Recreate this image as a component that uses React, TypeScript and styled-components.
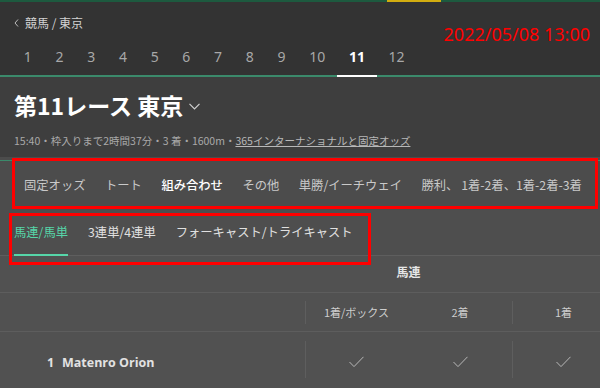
import { createGlobalStyle } from "styled-components";
import styled from "styled-components";

const GlobalStyle = createGlobalStyle`
  body {
    margin: 0;
    background: #515151;
    overflow: hidden;
    font-family: "Noto Sans CJK JP", "Noto Sans", sans-serif;
  }
`;

const races = [1, 2, 3, 4, 5, 6, 7, 8, 9, 10, 11, 12];

const marketTabs = [
  { label: "固定オッズ" },
  { label: "トート" },
  { label: "組み合わせ", active: true },
  { label: "その他" },
  { label: "単勝/イーチウェイ" },
  { label: "勝利、 1着-2着、1着-2着-3着" },
];

const subTabs = [
  { label: "馬連/馬単", active: true },
  { label: "3連単/4連単" },
  { label: "フォーキャスト/トライキャスト" },
];

const ChevronLeft = () => (
  <svg width="5" height="8" viewBox="0 0 5 8">
    <polyline points="4,0.5 1,4 4,7.5" fill="none" stroke="#bdbdbd" strokeWidth="1" />
  </svg>
);

const ChevronDown = () => (
  <svg width="11" height="7" viewBox="0 0 11 7">
    <polyline points="0.5,0.8 5.5,5.8 10.5,0.8" fill="none" stroke="#d0d0d0" strokeWidth="1.2" />
  </svg>
);

const Check = () => (
  <svg width="15" height="12" viewBox="0 0 15 12">
    <polyline points="0.5,6 5,10.6 14.5,0.8" fill="none" stroke="#b8b8b8" strokeWidth="1" />
  </svg>
);

const App = () => {
  return (
    <>
      <GlobalStyle />
      <Page>
        <Header>
          <TopStrip>
            <StripPart $color="#1d5a3f" $width="387px" />
            <StripPart $color="#d2ad10" $width="54px" />
            <StripPart $color="#1d5a3f" />
          </TopStrip>
          <HeaderTop>
            <Breadcrumb>
              <ChevronLeft />
              <span>競馬 / 東京</span>
            </Breadcrumb>
            <Stamp>2022/05/08 13:00</Stamp>
          </HeaderTop>
          <RaceNav>
            {races.map((n) => (
              <RaceItem key={n} $active={n === 11}>
                {n}
              </RaceItem>
            ))}
          </RaceNav>
        </Header>

        <TitleSection>
          <Title>
            第11レース 東京
            <ChevronDown />
          </Title>
          <Meta>
            15:40・枠入りまで2時間37分・3 着・1600m・<MetaLink>365インターナショナルと固定オッズ</MetaLink>
          </Meta>
        </TitleSection>

        <TabsArea>
          <MarketBar>
            {marketTabs.map((t) => (
              <MarketTab key={t.label} $active={t.active}>
                {t.label}
              </MarketTab>
            ))}
          </MarketBar>
          <SubBar>
            {subTabs.map((t) => (
              <SubTab key={t.label} $active={t.active}>
                {t.label}
              </SubTab>
            ))}
          </SubBar>
          <Annotation $top="1px" $left="12px" $width="586px" $height="51px" />
          <Annotation $top="56px" $left="9px" $width="362px" $height="52px" />
        </TabsArea>

        <Table>
          <GroupRow>
            <Cell />
            <GroupCell>馬連</GroupCell>
            <Cell />
          </GroupRow>
          <HeadRow>
            <Cell />
            <HeadCell $divider>1着/ボックス</HeadCell>
            <HeadCell>2着</HeadCell>
            <HeadCell $divider>1着</HeadCell>
          </HeadRow>
          <DataRow>
            <Runner>
              <RunnerNo>1</RunnerNo>
              <span>Matenro Orion</span>
            </Runner>
            <CheckCell $divider>
              <Check />
            </CheckCell>
            <CheckCell>
              <Check />
            </CheckCell>
            <CheckCell $divider>
              <Check />
            </CheckCell>
          </DataRow>
        </Table>
      </Page>
    </>
  );
};

export default App;

const Page = styled.div`
  width: 600px;
  height: 388px;
  overflow: hidden;
  background: #515151;
`;

const Header = styled.header`
  background: #333333;
`;

const TopStrip = styled.div`
  display: flex;
  height: 2px;
`;

const StripPart = styled.div<{ $color: string; $width?: string }>`
  background: ${(p) => p.$color};
  flex: ${(p) => (p.$width ? `0 0 ${p.$width}` : "1")};
`;

const HeaderTop = styled.div`
  display: flex;
  justify-content: space-between;
  height: 42px;
`;

const Breadcrumb = styled.div`
  display: flex;
  align-items: center;
  gap: 6px;
  align-self: flex-start;
  padding: 13px 0 0 14px;
  font-size: 12px;
  line-height: 16px;
  color: #d2d2d2;
`;

const Stamp = styled.div`
  align-self: flex-start;
  padding: 21px 10px 0 0;
  font-family: "Noto Sans", "Liberation Sans", sans-serif;
  font-size: 18px;
  line-height: 22px;
  color: #ff0000;
`;

const RaceNav = styled.nav`
  display: flex;
  height: 31px;
  padding-left: 12px;
  border-bottom: 2px solid #3b8a6b;
`;

const RaceItem = styled.div<{ $active?: boolean }>`
  box-sizing: border-box;
  height: 33px;
  margin-bottom: -2px;
  padding: 4px 11.85px 0;
  font-family: "Noto Sans", sans-serif;
  font-size: 14px;
  line-height: 18px;
  color: ${(p) => (p.$active ? "#ffffff" : "#a8a8a8")};
  font-weight: ${(p) => (p.$active ? 700 : 400)};
  border-bottom: 2px solid ${(p) => (p.$active ? "#ffffff" : "transparent")};
`;

const TitleSection = styled.section`
  box-sizing: border-box;
  height: 80px;
  padding: 14px 14px 0;
  background: #3e3e3e;
`;

const Title = styled.h1`
  display: flex;
  align-items: center;
  gap: 6px;
  margin: 0;
  font-size: 23px;
  line-height: 28px;
  font-weight: 700;
  color: #ffffff;

  svg {
    margin-top: 3px;
  }
`;

const Meta = styled.p`
  margin: 15px 0 0;
  font-size: 10.5px;
  line-height: 14px;
  color: #a9a9a9;
`;

const MetaLink = styled.span`
  text-decoration: underline;
  color: #b8b8b8;
`;

const TabsArea = styled.div`
  position: relative;
`;

const MarketBar = styled.div`
  display: flex;
  align-items: center;
  gap: 19.5px;
  box-sizing: border-box;
  height: 53px;
  padding: 3px 0 0 24px;
  background: linear-gradient(to bottom, #4c4c4c 3px, #3b8a6b 3px, #3b8a6b 4px, #4c4c4c 4px);
  white-space: nowrap;
`;

const MarketTab = styled.div<{ $active?: boolean }>`
  font-size: 12.3px;
  line-height: 16px;
  color: ${(p) => (p.$active ? "#ffffff" : "#c9c9c9")};
  font-weight: ${(p) => (p.$active ? 500 : 400)};
`;

const SubBar = styled.div`
  display: flex;
  gap: 20px;
  box-sizing: border-box;
  height: 46px;
  padding-left: 14px;
  background: #4e4e4e;
  border-bottom: 1px solid #5e5e5e;
`;

const SubTab = styled.div<{ $active?: boolean }>`
  box-sizing: border-box;
  height: 46px;
  margin-bottom: -1px;
  font-size: 12.3px;
  line-height: 44px;
  color: ${(p) => (p.$active ? "#56d6a9" : "#e0e0e0")};
  border-bottom: 2px solid ${(p) => (p.$active ? "#56d6a9" : "transparent")};
`;

const Annotation = styled.div<{ $top: string; $left: string; $width: string; $height: string }>`
  position: absolute;
  top: ${(p) => p.$top};
  left: ${(p) => p.$left};
  width: ${(p) => p.$width};
  height: ${(p) => p.$height};
  box-sizing: border-box;
  border: 3px solid #ff0000;
  pointer-events: none;
`;

const Table = styled.div`
  width: 615px;
  background: #515151;
`;

const Row = styled.div`
  display: grid;
  grid-template-columns: 305px 103px 104px 103px;
  border-bottom: 1px solid #5d5d5d;
`;

const GroupRow = styled(Row)`
  grid-template-columns: 305px 207px 103px;
  height: 36px;
`;

const HeadRow = styled(Row)`
  height: 38px;
`;

const DataRow = styled(Row)`
  height: 58px;
  border-bottom: none;
`;

const Cell = styled.div<{ $divider?: boolean }>`
  position: relative;
  display: flex;
  align-items: center;
  justify-content: center;

  &::before {
    content: "";
    display: ${(p) => (p.$divider ? "block" : "none")};
    position: absolute;
    left: 0;
    top: 9px;
    bottom: 12px;
    width: 1px;
    background: #5e5e5e;
  }
`;

const GroupCell = styled(Cell)`
  align-items: flex-start;
  padding-top: 8px;
  font-size: 12px;
  line-height: 16px;
  font-weight: 700;
  color: #e6e6e6;
`;

const HeadCell = styled(Cell)`
  font-size: 11px;
  color: #cdcdcd;

  &::before {
    top: 8px;
    bottom: 7px;
  }
`;

const CheckCell = styled(Cell)`
  padding-top: 2px;
`;

const Runner = styled.div`
  display: flex;
  align-items: center;
  gap: 9px;
  padding: 2px 0 0 47px;
  font-family: "Open Sans", sans-serif;
  font-size: 12.5px;
  font-weight: 700;
  color: #e2e2e2;
`;

const RunnerNo = styled.span`
  width: 6px;
`;
